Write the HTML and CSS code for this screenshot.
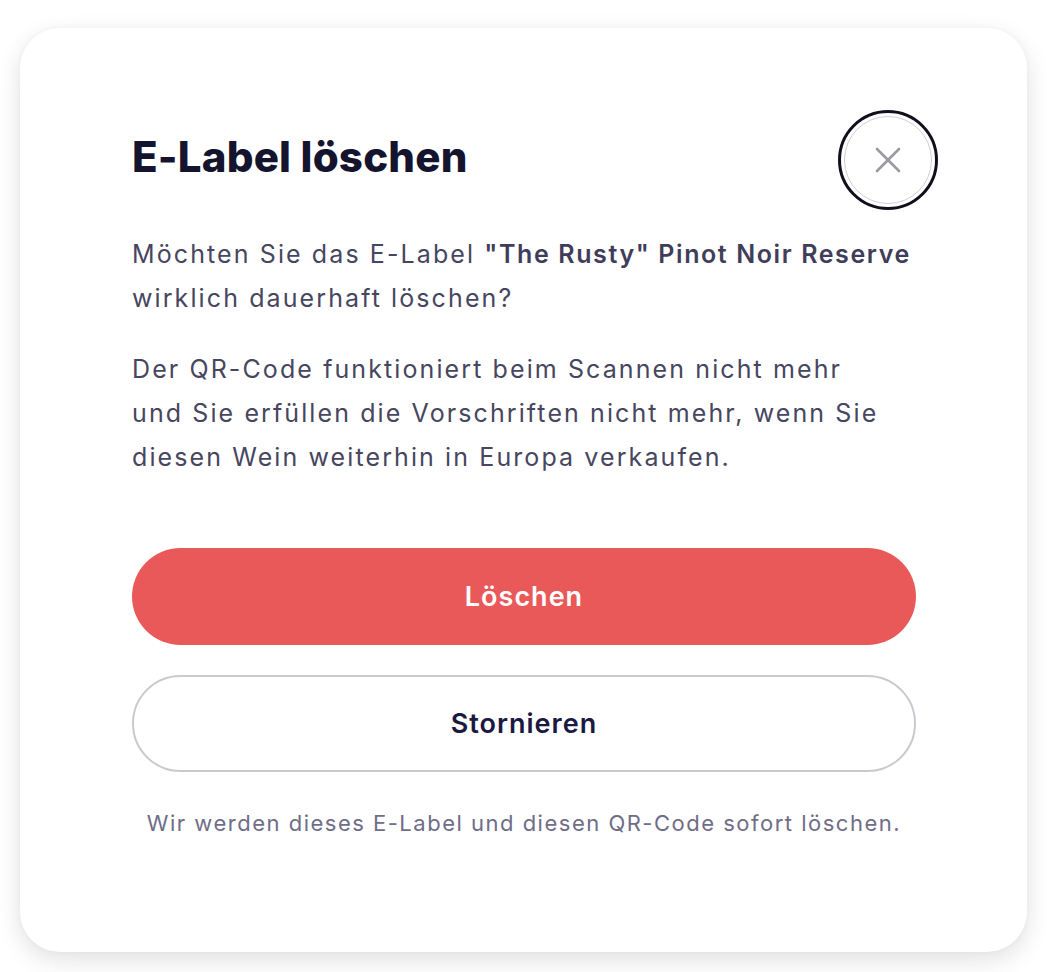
FILE: index.html
```html
<!DOCTYPE html>
<html lang="de">
<head>
<meta charset="utf-8">
<link rel="stylesheet" href="styles.css">
</head>
<body>
<div class="stage">
  <div class="modal">
    <div class="header">
      <h1 class="title">E-Label löschen</h1>
      <button class="close" aria-label="Schließen">
        <span class="close-inner">
          <svg width="28" height="28" viewBox="0 0 28 28"><path d="M3 3 L25 25 M25 3 L3 25" stroke="#9a9aa2" stroke-width="2.6" stroke-linecap="round" fill="none"/></svg>
        </span>
      </button>
    </div>
    <p class="text">Möchten Sie das E-Label <strong>"The Rusty" Pinot Noir Reserve</strong> wirklich dauerhaft löschen?</p>
    <p class="text second">Der QR-Code funktioniert beim Scannen nicht mehr und&nbsp;Sie erfüllen die Vorschriften nicht mehr, wenn Sie diesen Wein weiterhin in Europa verkaufen.</p>
    <div class="actions">
      <button class="btn btn-danger">Löschen</button>
      <button class="btn btn-outline">Stornieren</button>
    </div>
    <p class="note">Wir werden dieses E-Label und diesen QR-Code sofort löschen.</p>
  </div>
</div>
</body>
</html>
```
FILE: styles.css
```css
* { box-sizing: border-box; }
html, body { margin: 0; padding: 0; background: #ffffff; }
body { font-family: "Inter", "Lato", sans-serif; }
.stage {
  width: 1048px;
  height: 972px;
  padding: 28px 21px 20px 20px;
}
.modal {
  width: 1007px;
  height: 924px;
  background: #fff;
  border-radius: 40px;
  box-shadow: 0 8px 24px rgba(0,0,0,0.12), 0 0 6px rgba(0,0,0,0.03);
  padding: 104px 111px 0 112px;
}
.header {
  position: relative;
  height: 50px;
  margin-bottom: 50px;
}
.title {
  margin: 0;
  font-size: 42px;
  font-weight: 800;
  color: #15142e;
  letter-spacing: 0.2px;
  line-height: 50px;
}
.close {
  position: absolute;
  right: -22px;
  top: -22px;
  width: 100px;
  height: 100px;
  border-radius: 50%;
  border: 3px solid #0f0f1e;
  background: #fff;
  padding: 3px;
  cursor: pointer;
}
.close-inner {
  display: flex;
  width: 100%;
  height: 100%;
  border-radius: 50%;
  border: 1px solid #cfcfd4;
  align-items: center;
  justify-content: center;
}
.text {
  margin: 0;
  max-width: 780px;
  font-size: 25px;
  line-height: 44px;
  color: #47465f;
  letter-spacing: 2.1px;
}
.text strong { font-weight: 600; color: #3f3d5a; letter-spacing: 1.6px; }
.second { margin-top: 27px; }
.actions {
  display: flex;
  flex-direction: column;
  gap: 30px;
  margin-top: 69px;
}
.btn {
  width: 784px;
  height: 97px;
  border-radius: 49px;
  font-family: "Inter", "Lato", sans-serif;
  font-size: 27px;
  font-weight: 600;
  cursor: pointer;
  letter-spacing: 1px;
}
.btn-danger {
  background: #ea5959;
  border: none;
  color: #fff;
}
.btn-outline {
  background: #fff;
  border: 2px solid #c9c9cf;
  color: #1b1942;
}
.note {
  margin: 38px 0 0 0;
  text-align: center;
  font-size: 22px;
  color: #6f6d88;
  letter-spacing: 1.5px;
}
```
